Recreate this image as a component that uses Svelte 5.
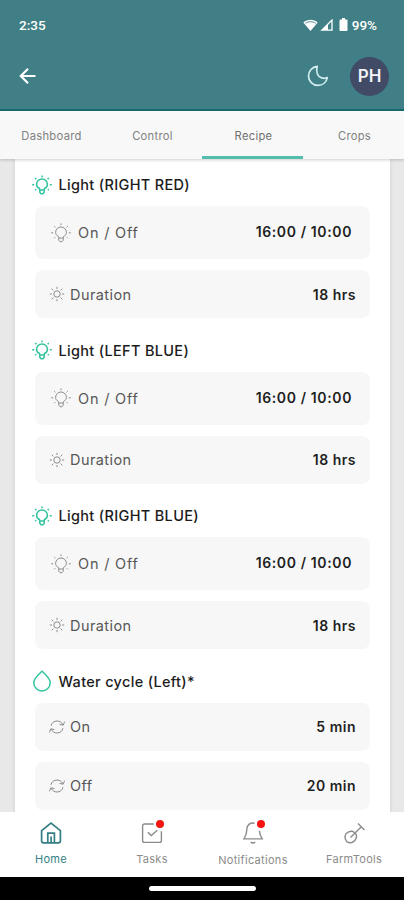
<script>
  let activeTab = $state("Recipe");
  let activePage = $state("Home");

  const tabs = ["Dashboard", "Control", "Recipe", "Crops"];

  const pages = [
    { label: "Home", icon: "home", alert: false },
    { label: "Tasks", icon: "tasks", alert: true },
    { label: "Notifications", icon: "bell", alert: true },
    { label: "FarmTools", icon: "shovel", alert: false },
  ];

  const lightRows = [
    { icon: "bulb", label: "On / Off", value: "16:00 / 10:00", big: true },
    { icon: "sun", label: "Duration", value: "18 hrs" },
  ];

  const sections = [
    { icon: "bulb", title: "Light (RIGHT RED)", rows: lightRows },
    { icon: "bulb", title: "Light (LEFT BLUE)", rows: lightRows },
    { icon: "bulb", title: "Light (RIGHT BLUE)", rows: lightRows },
    {
      icon: "drop",
      title: "Water cycle (Left)*",
      rows: [
        { icon: "cycle", label: "On", value: "5 min" },
        { icon: "cycle", label: "Off", value: "20 min" },
      ],
    },
  ];
</script>

{#snippet icon(name)}
  {#if name === "bulb"}
    <svg class="icon" width="20" height="20" viewBox="0 0 20 20">
      <path d="M7.800 15l-.3-1.500C5.600 12.600 4.600 11.200 4.600 9.400a5.400 5.400 0 0 1 10.800 0c0 1.800-1 3.200-2.900 4.100l-.3 1.500zM7.800 15v2.200l1.200 1.500h2l1.200-1.500V15" />
      <path d="M10 .4v1.800M3.200 3l1.200 1.200M16.800 3l-1.200 1.200M.2 9.800h2M17.800 9.800h2M3.200 15.200l1-1M16.800 15.200l-1-1" />
    </svg>
  {:else if name === "sun"}
    <svg class="icon" width="16" height="16" viewBox="0 0 16 16">
      <circle cx="8" cy="8" r="3.200" />
      <path d="M8 .8v2.200M8 13v2.200M.8 8H3M13 8h2.200M2.700 2.700l1.700 1.700M11.600 11.600l1.700 1.700M2.700 13.300l1.700-1.700M11.600 4.400l1.700-1.700" />
    </svg>
  {:else if name === "drop"}
    <svg class="icon" width="20" height="22" viewBox="0 0 20 22">
      <path d="M10 1.200C6.500 4.600 1.800 8.400 1.800 12.700a8.200 8.200 0 0 0 16.400 0C18.200 8.400 13.500 4.600 10 1.200z" />
    </svg>
  {:else if name === "cycle"}
    <svg class="icon" width="16" height="16" viewBox="0 0 16 16">
      <path d="M2 6.800C2.600 3.800 5 2 8 2c2.500 0 4.700 1.300 5.800 3.800M15.600 2.600l-1.400 3.600-3.600-.8M14 9.200c-.6 3-3 4.800-6 4.800-2.500 0-4.700-1.300-5.800-3.800M.4 13.400l1.400-3.600 3.600.8" />
    </svg>
  {:else if name === "home"}
    <svg class="icon" width="22" height="24" viewBox="0 0 22 24">
      <path d="M1.600 9.600L11 2l9.400 7.600v10.200a2 2 0 0 1-2 2H3.600a2 2 0 0 1-2-2z" />
      <path d="M7.800 21.500v-9.300h6.600v9.300M11.100 21.500v-6" />
    </svg>
  {:else if name === "tasks"}
    <svg class="icon" width="22" height="24" viewBox="0 0 22 24">
      <path d="M12.800 3H3.600a2 2 0 0 0-2 2v14.400a2 2 0 0 0 2 2h14.800a2 2 0 0 0 2-2V10.200M6.800 11.200l3.500 3.300 6-5.200" />
    </svg>
  {:else if name === "bell"}
    <svg class="icon" width="22" height="24" viewBox="0 0 22 24">
      <path d="M12.500 2.200C8 1.400 4.900 4.200 4.900 7.800c0 5-.9 7-2.900 10.100h18.200c-1.700-2.700-2.500-4.300-2.800-8M8.800 21c1 1.300 3.300 1.300 4.300 0" />
    </svg>
  {:else if name === "shovel"}
    <svg class="icon" width="22" height="24" viewBox="0 0 22 24">
      <path d="M3 12.800c2-2 4.900-3 7.200-2.300l3.100 3.100c.5 2.400-.2 4.900-2.400 6.800-1.900 1.500-5 1.500-6.900.5-2.100-2.100-2.600-5.900-1-8.100zM7.500 16.500L18.300 5.700M15 2.500l6.400 6.400" />
    </svg>
  {/if}
{/snippet}

<div class="screen">
  <header>
    <div class="status">
      <span>2:35</span>
      <div class="status-icons">
        <svg width="15" height="12" viewBox="0 0 15 12">
          <path d="M.3 3.400C4.300-.2 10.700-.2 14.700 3.400L7.500 12z" fill="#fff" />
          <path d="M2.400 4.300c3-2.100 7.200-2.100 10.200 0" fill="none" stroke="#3f7f85" stroke-width=".9" />
        </svg>
        <svg width="13" height="12" viewBox="0 0 13 12">
          <path d="M1.800 11.200L12 1v10.200z" fill="none" stroke="#fff" stroke-width="1.300" />
          <path d="M1.800 11L8 5v6z" fill="#fff" />
        </svg>
        <svg class="battery" width="9" height="13" viewBox="0 0 9 13">
          <path d="M3 0h3v1.500h1.500a1 1 0 0 1 1 1V12a1 1 0 0 1-1 1h-6a1 1 0 0 1-1-1V2.500a1 1 0 0 1 1-1H3z" fill="#fff" />
        </svg>
        <span>99%</span>
      </div>
    </div>
    <div class="toolbar">
      <button class="back" aria-label="Back">
        <svg width="18" height="18" viewBox="0 0 18 18">
          <path d="M16.500 9H2.500M9 1.800L1.800 9 9 16.200" fill="none" stroke="#fff" stroke-width="2.200" />
        </svg>
      </button>
      <button class="moon" aria-label="Dark mode">
        <svg width="22" height="22" viewBox="0 0 22 22">
          <path d="M10.200 1.300C5.200 1.800 1.500 6 1.500 11a9.400 9.400 0 0 0 9.400 9.400c4.800 0 8.500-3.300 9.400-7.800-1.500.7-3.600 1-5.600.3-4-1.300-6-5.700-4.500-11.600z" fill="none" stroke="#d4eef2" stroke-width="1.700" stroke-linejoin="round" />
        </svg>
      </button>
      <div class="avatar">PH</div>
    </div>
  </header>

  <nav class="tabs">
    {#each tabs as tab}
      <button class:active={activeTab === tab} onclick={() => (activeTab = tab)}>{tab}</button>
    {/each}
  </nav>

  <main>
    <div class="card">
      {#each sections as section}
        <section>
          <h2>{@render icon(section.icon)}<span>{section.title}</span></h2>
          {#each section.rows as row}
            <div class="row" class:big={row.big}>
              {@render icon(row.icon)}
              <span class="label">{row.label}</span>
              <span class="value">{row.value}</span>
            </div>
          {/each}
        </section>
      {/each}
    </div>
  </main>

  <nav class="bottom">
    {#each pages as page}
      <button class={page.icon} class:active={activePage === page.label} onclick={() => (activePage = page.label)}>
        <span class="glyph">
          {@render icon(page.icon)}
          {#if page.alert}<i class="dot"></i>{/if}
        </span>
        <span class="name">{page.label}</span>
      </button>
    {/each}
  </nav>
  <div class="gesture"><div class="pill"></div></div>
</div>

<style>
  :global(body) {
    margin: 0;
    overflow: hidden;
  }

  .screen {
    display: flex;
    flex-direction: column;
    width: 404px;
    height: 900px;
    overflow: hidden;
    font-family: Inter, "Open Sans", sans-serif;
    background: #e8e8e8;
  }

  button {
    border: 0;
    padding: 0;
    background: none;
    font-family: inherit;
  }

  svg {
    display: block;
    flex: none;
  }

  .icon {
    fill: none;
    stroke: currentColor;
    stroke-width: 1;
  }

  header {
    box-sizing: border-box;
    flex: none;
    height: 111px;
    background: #3f7f85;
    border-bottom: 2px solid #176b70;
    color: #fff;
  }

  .status {
    display: flex;
    justify-content: space-between;
    align-items: center;
    height: 49px;
    padding: 0 27px 0 19px;
    font-family: Roboto, sans-serif;
    font-size: 13.5px;
    font-weight: 500;
  }

  .status-icons {
    display: flex;
    align-items: center;
    gap: 2px;
  }

  .battery {
    margin: 0 2px 0 4px;
  }

  .toolbar {
    display: flex;
    align-items: center;
    height: 54px;
    padding: 0 15px 0 19px;
  }

  .moon {
    margin-left: auto;
    margin-right: 21px;
  }

  .avatar {
    display: flex;
    align-items: center;
    justify-content: center;
    width: 39px;
    height: 39px;
    border-radius: 50%;
    background: #414b66;
    color: #f2f2f6;
    font-size: 17px;
    font-weight: 600;
  }

  .tabs {
    display: flex;
    flex: none;
    height: 48px;
    background: #f8f8f8;
    box-shadow: 0 1px 3px rgba(0, 0, 0, 0.2);
    z-index: 1;
  }

  .tabs button {
    flex: 1;
    padding: 4px 0 0 2px;
    border-bottom: 3px solid transparent;
    color: #808080;
    font-size: 11.2px;
    letter-spacing: 0.3px;
  }

  .tabs button.active {
    border-color: #55bdae;
    color: #707070;
  }

  main {
    flex: 1;
    min-height: 0;
    padding: 0 14px 0 15px;
    overflow: hidden;
  }

  .card {
    box-sizing: border-box;
    height: 900px;
    padding: 5px 20px 0;
    background: #fff;
    box-shadow: 0 0 4px rgba(0, 0, 0, 0.12);
  }

  section {
    display: flex;
    flex-direction: column;
    gap: 11px;
    margin-bottom: 11.5px;
  }

  h2 {
    display: flex;
    align-items: center;
    gap: 7px;
    height: 41px;
    margin: 0 0 -10px -3.5px;
    color: #1c1c1c;
    font-size: 14.5px;
    font-weight: 500;
    letter-spacing: 0.32px;
  }

  h2 :global(.icon) {
    color: #31c39e;
    stroke-width: 1.5;
  }

  .row {
    display: flex;
    align-items: center;
    box-sizing: border-box;
    height: 48px;
    padding: 0 14px;
    border-radius: 8px;
    background: #f7f7f7;
    color: #8c8c8c;
  }

  .row.big {
    height: 53px;
    padding: 0 18px 0 16px;
  }

  .label {
    margin-left: 5px;
    color: #575757;
    font-size: 14.5px;
    letter-spacing: 0.42px;
  }

  .big .label {
    margin-left: 7px;
    letter-spacing: 0.8px;
  }

  .value {
    margin-left: auto;
    color: #1f1f1f;
    font-size: 14px;
    font-weight: 600;
    letter-spacing: 0.5px;
  }

  .big .value {
    margin-bottom: 2px;
    letter-spacing: 0.62px;
  }

  .bottom {
    display: flex;
    flex: none;
    height: 65px;
    background: #fff;
    z-index: 1;
  }

  .bottom button {
    display: flex;
    flex: 1;
    flex-direction: column;
    align-items: center;
    padding: 9px 0 0 1px;
    color: #8b8b8b;
  }

  .bottom button.active {
    color: #347f84;
  }

  .glyph {
    position: relative;
    margin-bottom: 7px;
  }

  .bottom .bell .glyph {
    margin-bottom: 8px;
  }

  .bottom .icon {
    stroke-width: 1.4;
  }

  .bottom .active .icon {
    stroke-width: 1.7;
  }

  .dot {
    position: absolute;
    top: -1px;
    right: -1px;
    width: 8px;
    height: 8px;
    border-radius: 50%;
    background: #f3150f;
  }

  .name {
    font-size: 11px;
    line-height: 14px;
    letter-spacing: 0.3px;
  }

  .gesture {
    display: flex;
    align-items: center;
    justify-content: center;
    flex: none;
    height: 23px;
    background: #000;
  }

  .pill {
    width: 107px;
    height: 5px;
    border-radius: 3px;
    background: #fff;
  }
</style>
